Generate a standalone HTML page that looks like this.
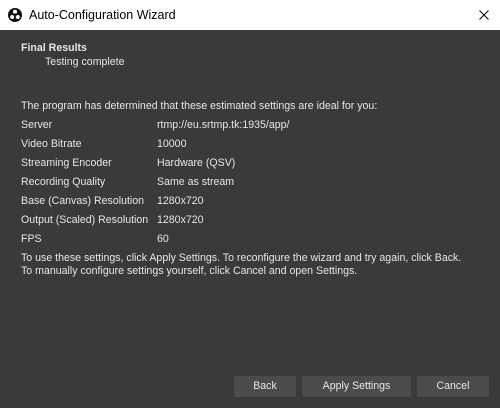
<!DOCTYPE html>
<html><head><style>
body{margin:0;width:500px;height:408px;overflow:hidden;background:#3a3a3a;font-family:"Liberation Sans",sans-serif;font-size:10.6px;color:#e6e6e6;position:relative}
.title{position:absolute;left:0;top:0;width:500px;height:30px;background:#fff;color:#000;font-size:12.5px}
.title span{position:absolute;left:29px;top:8px}
.t{position:absolute;white-space:nowrap;line-height:12px;margin-top:1px}
.btn{position:absolute;top:376px;height:21px;background:#4b4b4b;border-radius:2px;text-align:center;line-height:21px;color:#e6e6e6}
</style></head><body>
<div class="title">
<svg style="position:absolute;left:8px;top:8px" width="14" height="14" viewBox="0 0 14 14"><circle cx="7" cy="7" r="7" fill="#111"/><circle cx="7" cy="3.8" r="2" fill="#fff"/><circle cx="4.2" cy="9" r="2" fill="#fff"/><circle cx="9.8" cy="9" r="2" fill="#fff"/><circle cx="7" cy="7" r="1.6" fill="#111"/></svg>
<span>Auto-Configuration Wizard</span>
<svg style="position:absolute;left:479px;top:10px" width="10" height="10" viewBox="0 0 10 10"><path d="M0.5 0.5L9.5 9.5M9.5 0.5L0.5 9.5" stroke="#000" stroke-width="1"/></svg>
</div>
<div class="t" style="left:21px;top:41px;font-weight:bold">Final Results</div>
<div class="t" style="left:45px;top:55px">Testing complete</div>
<div class="t" style="left:21px;top:99px">The program has determined that these estimated settings are ideal for you:</div>
<div class="t" style="left:21px;top:118px">Server</div><div class="t" style="left:157px;top:118px">rtmp://eu.srtmp.tk:1935/app/</div>
<div class="t" style="left:21px;top:137px">Video Bitrate</div><div class="t" style="left:157px;top:137px">10000</div>
<div class="t" style="left:21px;top:156px">Streaming Encoder</div><div class="t" style="left:157px;top:156px">Hardware (QSV)</div>
<div class="t" style="left:21px;top:175px">Recording Quality</div><div class="t" style="left:157px;top:175px">Same as stream</div>
<div class="t" style="left:21px;top:194px">Base (Canvas) Resolution</div><div class="t" style="left:157px;top:194px">1280x720</div>
<div class="t" style="left:21px;top:213px">Output (Scaled) Resolution</div><div class="t" style="left:157px;top:213px">1280x720</div>
<div class="t" style="left:21px;top:232px">FPS</div><div class="t" style="left:157px;top:232px">60</div>
<div class="t" style="left:21px;top:251px">To use these settings, click Apply Settings. To reconfigure the wizard and try again, click Back.</div>
<div class="t" style="left:21px;top:264px">To manually configure settings yourself, click Cancel and open Settings.</div>
<div class="btn" style="left:234px;width:62px">Back</div>
<div class="btn" style="left:302px;width:109px">Apply Settings</div>
<div class="btn" style="left:417px;width:72px">Cancel</div>
</body></html>
